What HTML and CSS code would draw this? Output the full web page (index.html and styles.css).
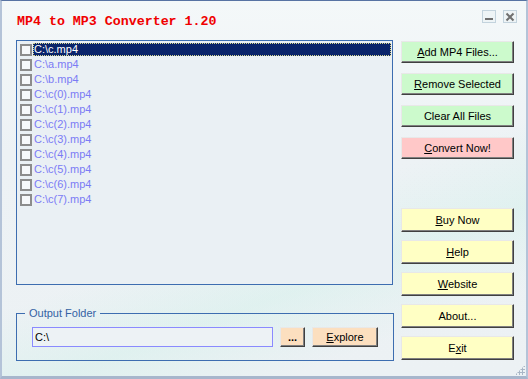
FILE: index.html
```html
<!DOCTYPE html>
<html lang="en">
<head>
    <meta charset="UTF-8">
    <title>MP4 to MP3 Converter 1.20</title>
    <link rel="stylesheet" href="styles.css">
</head>
<body>
    <div class="window">
        <!-- Заголовок -->
        <div class="titlebar">
            <h1 class="title">MP4 to MP3 Converter 1.20</h1>
            <div class="controls">
                <span class="ctl"><svg width="12" height="10" viewBox="0 0 12 10"><rect x="2" y="6" width="8" height="2" fill="#707070"/></svg></span>
                <span class="ctl"><svg width="12" height="10" viewBox="0 0 12 10"><path d="M2.5 1.5 L9.5 8.5 M9.5 1.5 L2.5 8.5" stroke="#707070" stroke-width="2"/></svg></span>
            </div>
        </div>

        <div class="main">
            <div class="left">
                <!-- Список файлов -->
                <ul class="filelist">
                    <li class="selected"><span class="check"></span><span class="name">C:\c.mp4</span></li>
                    <li><span class="check"></span><span class="name">C:\a.mp4</span></li>
                    <li><span class="check"></span><span class="name">C:\b.mp4</span></li>
                    <li><span class="check"></span><span class="name">C:\c(0).mp4</span></li>
                    <li><span class="check"></span><span class="name">C:\c(1).mp4</span></li>
                    <li><span class="check"></span><span class="name">C:\c(2).mp4</span></li>
                    <li><span class="check"></span><span class="name">C:\c(3).mp4</span></li>
                    <li><span class="check"></span><span class="name">C:\c(4).mp4</span></li>
                    <li><span class="check"></span><span class="name">C:\c(5).mp4</span></li>
                    <li><span class="check"></span><span class="name">C:\c(6).mp4</span></li>
                    <li><span class="check"></span><span class="name">C:\c(7).mp4</span></li>
                </ul>

                <!-- Папка вывода -->
                <fieldset class="output">
                    <legend>Output Folder</legend>
                    <div class="output-row">
                        <input class="path" type="text" value="C:\">
                        <button class="btn peach dots">...</button>
                        <button class="btn peach explore"><u>E</u>xplore</button>
                    </div>
                </fieldset>
            </div>

            <!-- Кнопки -->
            <div class="side">
                <div class="group top">
                    <button class="btn green"><u>A</u>dd MP4 Files...</button>
                    <button class="btn green"><u>R</u>emove Selected</button>
                    <button class="btn green">Clear All Files</button>
                    <button class="btn pink"><u>C</u>onvert Now!</button>
                </div>
                <div class="group bottom">
                    <button class="btn yellow"><u>B</u>uy Now</button>
                    <button class="btn yellow"><u>H</u>elp</button>
                    <button class="btn yellow"><u>W</u>ebsite</button>
                    <button class="btn yellow">About...</button>
                    <button class="btn yellow">E<u>x</u>it</button>
                </div>
            </div>
        </div>
        <div class="grip"></div>
    </div>
</body>
</html>
```
FILE: styles.css
```css
/* Общие стили */
* {
    margin: 0;
    padding: 0;
    box-sizing: border-box;
}

body {
    font-family: 'Liberation Sans', Arial, sans-serif;
    font-size: 11px;
    background: #dfe7ee;
    overflow: hidden;
}

.window {
    position: relative;
    width: 528px;
    height: 379px;
    background:
        linear-gradient(160deg, rgba(255,255,255,0) 55%, rgba(200,240,230,0.35) 70%, rgba(255,255,255,0) 85%),
        linear-gradient(180deg, #f4f8f9 0%, #edf2f5 40%, #ecf1f4 100%);
    border-top: 1px solid #5873a3;
    border-left: 2px solid #b4c3d8;
    border-right: 2px solid #b4c3d8;
    border-bottom: 3px solid #a7b6cc;
}

/* Заголовок */
.titlebar {
    height: 39px;
    display: flex;
    justify-content: space-between;
    align-items: flex-start;
    padding: 0 9px 0 15px;
}

.title {
    font-family: 'Liberation Mono', 'Courier New', monospace;
    font-size: 13.3px;
    font-weight: 700;
    color: #f00000;
    line-height: 15px;
    margin-top: 13px;
}

.controls {
    display: flex;
    gap: 7px;
    margin-top: 9px;
}

.ctl {
    display: flex;
    align-items: center;
    justify-content: center;
    width: 14px;
    height: 13px;
    border: 1px solid #c3d3dd;
    background: #eef4f6;
}

.main {
    display: flex;
    gap: 8px;
    padding-left: 14px;
}

.left {
    width: 377px;
}

/* Список файлов */
.filelist {
    list-style: none;
    height: 245px;
    border: 1px solid #3d6db0;
    background: #eaf0f4;
    padding: 1px 1px 0 3px;
}

.filelist li {
    display: flex;
    align-items: center;
    height: 15px;
}

.check {
    width: 12px;
    height: 12px;
    border: 2px solid #8c8c8c;
    background: #f6f8fa;
    margin-right: 1px;
    flex-shrink: 0;
}

.name {
    color: #7b7bf5;
    padding: 0 1px;
    line-height: 13px;
}

.filelist li.selected .name {
    flex: 1;
    color: #ffffff;
    background: #0a246a;
    outline: 1px dotted #d8d890;
    outline-offset: -1px;
}

/* Папка вывода */
.output {
    margin-top: 22px;
    border: 1px solid #3d6db0;
    padding: 7px 15px 11px 15px;
    height: 54px;
}

.output legend {
    color: #3462a4;
    padding: 0 4px;
    margin-left: -7px;
    line-height: 13px;
}

.output-row {
    display: flex;
    align-items: center;
}

.path {
    width: 241px;
    height: 20px;
    border: 1px solid #8a8aff;
    background: #edf2f5;
    font-family: 'Liberation Sans', Arial, sans-serif;
    font-size: 11px;
    color: #000;
    padding: 0 2px;
    outline: none;
}

/* Кнопки */
.btn {
    font-family: 'Liberation Sans', Arial, sans-serif;
    font-size: 11px;
    color: #000;
    border: 1px solid;
    border-color: #e8e8e8 #404040 #404040 #e8e8e8;
    box-shadow: inset -1px -1px 0 #808080;
    cursor: pointer;
}

.btn u {
    text-decoration: underline;
}

.dots {
    width: 25px;
    height: 20px;
    margin-left: 7px;
    font-weight: 700;
}

.explore {
    width: 66px;
    height: 20px;
    margin-left: 7px;
}

.green { background: #ccfacc; }
.pink { background: #ffc8c8; }
.yellow { background: #ffffc4; }
.peach { background: #fcdfbf; }

.side {
    width: 113px;
    display: flex;
    flex-direction: column;
}

.group {
    display: flex;
    flex-direction: column;
}

.group.top {
    gap: 10px;
    margin-top: 1px;
}

.group.top .btn {
    height: 22px;
}

.group.bottom {
    gap: 8px;
    margin-top: 49px;
}

.group.bottom .btn {
    height: 24px;
}

/* Уголок изменения размера */
.grip {
    position: absolute;
    right: 1px;
    bottom: 1px;
    width: 10px;
    height: 10px;
    background:
        radial-gradient(circle, #a9b6c6 1px, transparent 1.2px) 0 0 / 3px 3px;
    clip-path: polygon(100% 0, 100% 100%, 0 100%);
}
```
